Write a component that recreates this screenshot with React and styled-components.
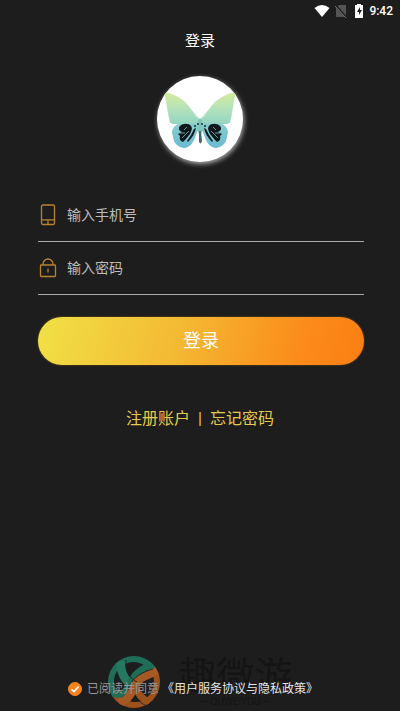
import React, { useState } from "react";
import styled, { createGlobalStyle } from "styled-components";

const GlobalStyle = createGlobalStyle`
  * { box-sizing: border-box; }
  body { margin: 0; background: #1d1d1d; }
  body, button, input { font-family: Roboto, "Noto Sans CJK SC", sans-serif; }
`;

const Page = styled.div`
  position: relative;
  display: flex;
  flex-direction: column;
  min-height: 100vh;
  background: #1d1d1d;
  color: #fff;
  overflow: hidden;
`;

const StatusBar = styled.div`
  display: flex;
  align-items: center;
  justify-content: flex-end;
  height: 22px;
  padding-right: 7px;
  font-size: 12px;
  font-weight: 500;
  line-height: 22px;
`;

const StatusIcon = styled.svg`
  display: block;
  flex: none;
  width: ${(p) => p.$width}px;
  height: 14px;
  margin-right: ${(p) => p.$gap}px;
`;

const Header = styled.header`
  display: flex;
  align-items: center;
  justify-content: center;
  height: 38px;
`;

const Title = styled.h1`
  margin: 0;
  font-size: 15px;
  font-weight: 400;
  line-height: 20px;
`;

const Avatar = styled.div`
  align-self: center;
  width: 86px;
  height: 86px;
  margin-top: 16px;
  border-radius: 50%;
  background: #fff;
  box-shadow: 1px 2px 5px rgba(255, 255, 255, 0.65);
  overflow: hidden;

  svg { display: block; width: 100%; height: 100%; }
`;

const Form = styled.form`
  display: flex;
  flex-direction: column;
  margin: 27px 36px 0 38px;
`;

const Field = styled.label`
  display: flex;
  align-items: center;
  height: 53px;
  border-bottom: 1px solid #a9a9a9;

  svg { flex: none; width: 20px; height: 22px; }
`;

const TextInput = styled.input`
  flex: 1;
  min-width: 0;
  height: 32px;
  margin-left: 9px;
  padding: 0;
  border: 0;
  outline: 0;
  background: transparent;
  color: #fff;
  font-size: 14px;

  &::placeholder { color: #bdbdbd; opacity: 1; }
`;

const SubmitButton = styled.button`
  height: 48px;
  margin-top: 22px;
  padding: 0;
  border: 0;
  border-radius: 24px;
  background: linear-gradient(105deg, #f0e146 0%, #f4b732 45%, #fb8b1a 80%, #fc7e12 100%);
  box-shadow: 0 0 2px rgba(180, 125, 20, 0.7);
  color: #fff;
  font-size: 18px;
  line-height: 24px;
`;

const Links = styled.nav`
  display: flex;
  justify-content: center;
  align-items: center;
  gap: 8px;
  margin-top: 42px;
  color: #e5cb4b;
  font-size: 16px;
  line-height: 24px;
`;

const TextLink = styled.a`
  color: inherit;
  text-decoration: none;
`;

const Agreement = styled.footer`
  position: relative;
  z-index: 1;
  display: flex;
  align-items: center;
  justify-content: center;
  margin: auto 14px 12px 0;
  font-size: 12px;
  line-height: 20px;
`;

const Checkbox = styled.input`
  appearance: none;
  flex: none;
  width: 14px;
  height: 14px;
  margin: 0 5px 0 0;
  border: 1px solid #f5811f;
  border-radius: 50%;

  &:checked {
    background: #f5811f url("data:image/svg+xml,%3Csvg xmlns='http://www.w3.org/2000/svg' viewBox='0 0 12 12'%3E%3Cpath d='M2.5 6.2 5 8.6 9.6 3.6' fill='none' stroke='white' stroke-width='1.5'/%3E%3C/svg%3E") center / 12px 12px no-repeat;
  }
`;

const AgreementLabel = styled.label`
  color: #999;
`;

const PolicyLink = styled(TextLink)`
  margin-left: 3px;
  color: #e6e6e6;
`;

const Watermark = styled.div`
  position: absolute;
  right: 0;
  bottom: 2px;
  left: 0;
  display: flex;
  align-items: center;
  justify-content: center;
  gap: 17px;
  pointer-events: none;

  svg { width: 54px; height: 54px; opacity: 0.75; }
`;

const WatermarkText = styled.div`
  display: flex;
  flex-direction: column;
  align-items: center;
  color: #141414;
  font-size: 38px;
  font-weight: 400;
  line-height: 40px;
`;

const WatermarkCaption = styled.small`
  font-size: 10px;
  line-height: 12px;
`;

function Butterfly() {
  return (
    <svg viewBox="0 0 86 86" aria-hidden="true">
      <defs>
        <linearGradient id="upper" x1="0" y1="14" x2="0" y2="50" gradientUnits="userSpaceOnUse">
          <stop offset="0" stopColor="#dcec9b" />
          <stop offset="0.5" stopColor="#b5e2b8" />
          <stop offset="1" stopColor="#8fd3c4" />
        </linearGradient>
        <linearGradient id="lower" x1="0" y1="46" x2="0" y2="73" gradientUnits="userSpaceOnUse">
          <stop offset="0" stopColor="#8bd0cb" />
          <stop offset="1" stopColor="#67b9d3" />
        </linearGradient>
        <g id="wing">
          <path d="M43 43 39 40C36 36 33 31 29 27C23 21 15 17 6 16C9 22 9 26 10 31C11 37 12 43 13 46Q14 48 18 48L43 50Z" fill="url(#upper)" />
          <path d="M42 47 21 48C15 51 14 56 16 60C16 67 21 71 27 72C34 71 37 66 40 56L43 50Z" fill="url(#lower)" />
          <path d="M23 50C26 47 32 47 34 50C36 53 34 55 33 58L29 63 26 66C24 65 22 64 23 60L21 58 25 56C22 55 21 52 23 50Z" fill="#10181b" />
          <path d="M39 52C38 57 35 62 31 66L30 65 34 59 37 53Z" fill="#10181b" />
          <path d="M25 62 32 55M23 57 28 57M30 51 27 54" stroke="#78bcc1" strokeWidth="0.8" />
          <circle cx="38" cy="50" r="1" fill="#142629" />
          <path d="M42 43 38 37" stroke="#c9e8d5" strokeWidth="0.7" />
        </g>
      </defs>
      <use href="#wing" />
      <use href="#wing" transform="translate(86 0) scale(-1 1)" />
      <path d="M41 44Q43 41 45 44L46 54 43 60 40 54Z" fill="#82c5be" />
      <path d="M42 56Q43 53 44 56L45 65Q43 70 42 65Z" fill="#4b6468" />
      <circle cx="41" cy="48" r="0.9" fill="#142629" />
      <circle cx="45" cy="48" r="0.9" fill="#142629" />
    </svg>
  );
}

function PhoneIcon() {
  return (
    <svg viewBox="0 0 20 22" fill="none" stroke="#b9832f" strokeWidth="1.3" aria-hidden="true">
      <rect x="3.5" y="1" width="13" height="19.5" rx="1.6" />
      <path d="M3.5 15.8h13M10 16v4" />
    </svg>
  );
}

function LockIcon() {
  return (
    <svg viewBox="0 0 20 22" fill="none" stroke="#b9832f" strokeWidth="1.3" aria-hidden="true">
      <rect x="2.5" y="8" width="15" height="11.5" rx="0.8" />
      <path d="M5 8V7a5 5 0 0 1 10 0v1M10 11.5v4" />
    </svg>
  );
}

function WatermarkLogo() {
  return (
    <svg viewBox="0 0 54 54" fill="none" aria-hidden="true">
      <clipPath id="disc"><circle cx="27" cy="27" r="26" /></clipPath>
      <g clipPath="url(#disc)">
        <path d="M6 37A23 23 0 0 1 47 16" stroke="#238a6c" strokeWidth="7" />
        <path d="M48 17A23 23 0 0 1 7 38" stroke="#c8641f" strokeWidth="7" />
        <path d="M14 6C13 17 18 27 29 33" stroke="#289576" strokeWidth="9" />
        <path d="M45 10C31 14 25 23 22 31C18 39 11 41 4 38" stroke="#20886a" strokeWidth="7" />
        <path d="M52 15C37 22 31 23 27 32C24 41 20 46 12 48" stroke="#d36d27" strokeWidth="8" />
        <path d="M29 32C31 40 36 45 43 47" stroke="#c8641f" strokeWidth="7" />
        <path d="M19 5C18 15 22 23 30 27M21 35C23 26 31 18 46 14M28 41C31 46 35 49 40 51" stroke="#1d1d1d" strokeWidth="0.8" />
      </g>
    </svg>
  );
}

export default function App() {
  const [agreed, setAgreed] = useState(true);

  return (
    <>
      <GlobalStyle />
      <Page>
        <StatusBar>
          <StatusIcon $width={16} $gap={5} viewBox="0 0 16 14" aria-hidden="true">
            <path d="M0.5 4Q8-2 15.5 4L8 13Z" fill="#fff" />
          </StatusIcon>
          <StatusIcon $width={12} $gap={7} viewBox="0 0 12 14" aria-hidden="true">
            <path d="M4 1h7v12H1V4Z" fill="#555" />
            <path d="M0 1 12 14" stroke="#1d1d1d" strokeWidth="2" />
            <path d="M0 2 11 14" stroke="#777" />
          </StatusIcon>
          <StatusIcon $width={10} $gap={5} viewBox="0 0 10 14" aria-hidden="true">
            <path d="M3 0h4v1h2v13H1V1h2Z" fill="#fff" />
            <path d="M6 3 3 8h2v3l3-5H6Z" fill="#1d1d1d" />
          </StatusIcon>
          <time>9:42</time>
        </StatusBar>

        <Header><Title>登录</Title></Header>
        <Avatar><Butterfly /></Avatar>

        <Form onSubmit={(event) => event.preventDefault()}>
          <Field>
            <PhoneIcon />
            <TextInput type="tel" aria-label="手机号" placeholder="输入手机号" />
          </Field>
          <Field>
            <LockIcon />
            <TextInput type="password" aria-label="密码" placeholder="输入密码" />
          </Field>
          <SubmitButton type="submit">登录</SubmitButton>
        </Form>

        <Links>
          <TextLink href="#register">注册账户</TextLink>
          <span>|</span>
          <TextLink href="#forgot">忘记密码</TextLink>
        </Links>

        <Agreement>
          <Checkbox
            id="agreement"
            type="checkbox"
            checked={agreed}
            onChange={(event) => setAgreed(event.target.checked)}
          />
          <AgreementLabel htmlFor="agreement">已阅读并同意</AgreementLabel>
          <PolicyLink href="#policy">《用户服务协议与隐私政策》</PolicyLink>
        </Agreement>

        <Watermark aria-hidden="true">
          <WatermarkLogo />
          <WatermarkText>
            趣微游
            <WatermarkCaption>— QUWEIYOU —</WatermarkCaption>
          </WatermarkText>
        </Watermark>
      </Page>
    </>
  );
}
